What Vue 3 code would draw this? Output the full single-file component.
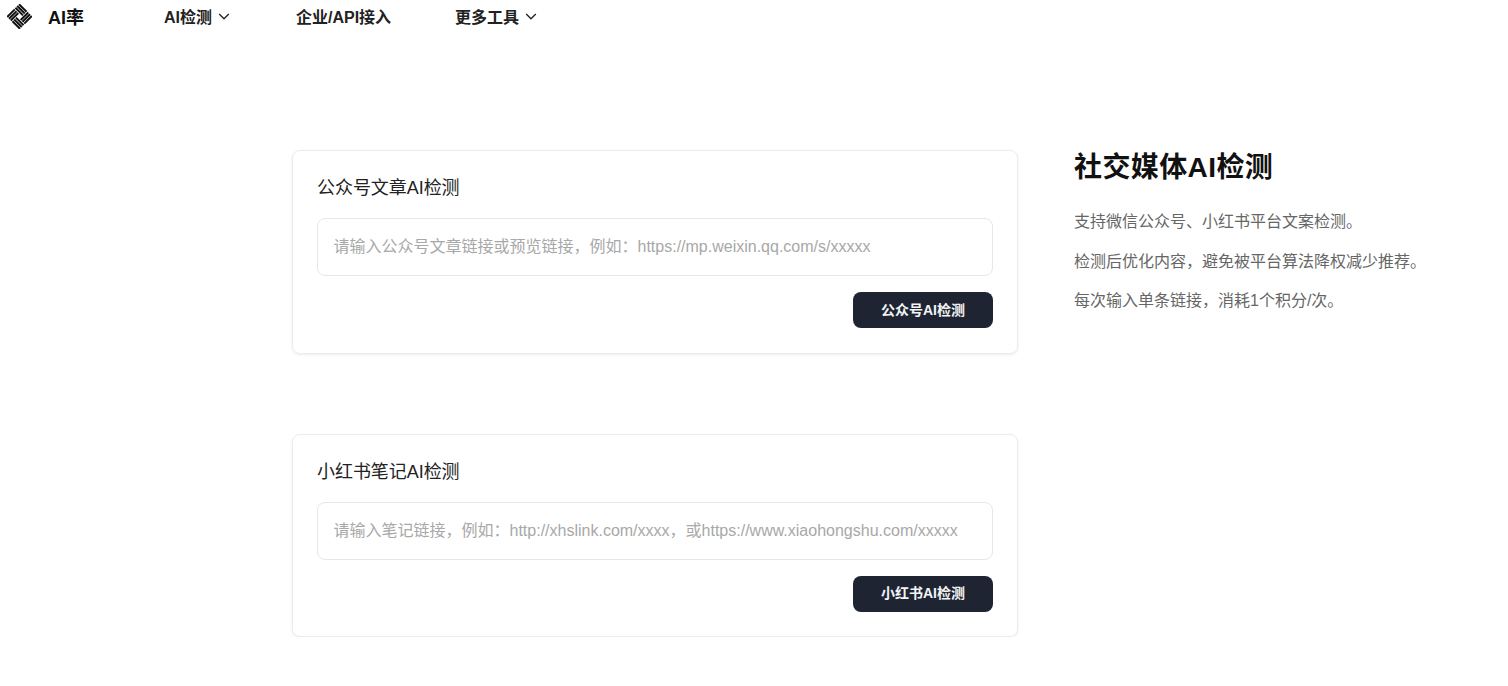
<template>
  <div class="page">
    <header class="nav">
      <div class="brand">
        <svg class="logo" viewBox="0 0 24 24" fill="none" stroke="#111" stroke-width="1.85">
          <g v-for="a in [0, 90, 180, 270]" :key="a" :transform="`rotate(${a} 12 12)`">
            <path d="M0.19 12.49 L7.47 5.21" />
            <path d="M1.89 14.19 L9.17 6.91" />
            <path d="M3.59 15.89 L10.87 8.61" />
          </g>
        </svg>
        <span class="brand-name">AI率</span>
      </div>
      <nav class="menu">
        <a v-for="item in menu" :key="item.label" class="menu-item" :style="{ width: item.width + 'px' }">
          {{ item.label }}
          <svg v-if="item.arrow" class="arrow" viewBox="0 0 12 12" fill="none" stroke="#222" stroke-width="1.3">
            <path d="M1.2 4 L6 8.8 L10.8 4" />
          </svg>
        </a>
      </nav>
    </header>

    <main class="content">
      <section class="cards">
        <div v-for="card in cards" :key="card.title" class="card">
          <h3 class="card-title">{{ card.title }}</h3>
          <input class="link-input" type="text" :placeholder="card.placeholder" />
          <div class="actions">
            <button class="submit">{{ card.button }}</button>
          </div>
        </div>
      </section>

      <aside class="intro">
        <h1 class="intro-title">社交媒体AI检测</h1>
        <p v-for="line in lines" :key="line" class="intro-line">{{ line }}</p>
      </aside>
    </main>
  </div>
</template>

<script setup>
const menu = [
  { label: 'AI检测', arrow: true, width: 132 },
  { label: '企业/API接入', arrow: false, width: 159 },
  { label: '更多工具', arrow: true, width: 120 }
]

const cards = [
  {
    title: '公众号文章AI检测',
    placeholder: '请输入公众号文章链接或预览链接，例如：https://mp.weixin.qq.com/s/xxxxx',
    button: '公众号AI检测'
  },
  {
    title: '小红书笔记AI检测',
    placeholder: '请输入笔记链接，例如：http://xhslink.com/xxxx，或https://www.xiaohongshu.com/xxxxx',
    button: '小红书AI检测'
  }
]

const lines = [
  '支持微信公众号、小红书平台文案检测。',
  '检测后优化内容，避免被平台算法降权减少推荐。',
  '每次输入单条链接，消耗1个积分/次。'
]
</script>

<style>
html, body {
  margin: 0;
  background: #fff;
}
</style>

<style scoped>
.page {
  font-family: "Liberation Sans", "Noto Sans CJK SC", sans-serif;
  color: #111;
}

.nav {
  display: flex;
  align-items: center;
  height: 32px;
  padding-left: 7px;
}

.brand {
  display: flex;
  align-items: center;
  width: 157px;
}

.logo {
  width: 25px;
  height: 25px;
  margin-right: 16px;
}

.brand-name {
  font-size: 18px;
  font-weight: 700;
}

.menu {
  display: flex;
}

.menu-item {
  display: flex;
  align-items: center;
  gap: 6px;
  font-size: 16px;
  font-weight: 700;
  color: #222;
}

.arrow {
  width: 12px;
  height: 12px;
}

.content {
  display: flex;
  align-items: flex-start;
  padding: 118px 0 0 292px;
}

.cards {
  display: flex;
  flex-direction: column;
  gap: 80px;
  width: 726px;
  margin-right: 56px;
}

.card {
  box-sizing: border-box;
  height: 203.5px;
  padding: 24px 24px 24px;
  border: 1px solid #ececec;
  border-radius: 8px;
  box-shadow: 0 1px 3px rgba(0, 0, 0, 0.08);
}

.card-title {
  margin: 0 0 16px;
  font-size: 18px;
  font-weight: 400;
  line-height: 27px;
  letter-spacing: -0.05px;
  color: #222;
}

.link-input {
  display: block;
  box-sizing: border-box;
  width: 100%;
  height: 58px;
  padding: 0 15.5px;
  border: 1px solid #e5e7eb;
  border-radius: 8px;
  outline: none;
  font-family: inherit;
  font-size: 16px;
}

.link-input::placeholder {
  color: #a8a8a8;
}

.actions {
  display: flex;
  justify-content: flex-end;
  margin-top: 16px;
}

.submit {
  width: 140px;
  height: 36px;
  padding: 0 0 3px;
  border: none;
  border-radius: 8px;
  background: #1f2433;
  color: #f3f4f6;
  font-family: inherit;
  font-size: 14px;
  font-weight: 700;
}

.intro-title {
  margin: 0 0 24px;
  font-size: 28px;
  line-height: 36px;
  font-weight: 700;
  letter-spacing: 0.4px;
  color: #111;
}

.intro-line {
  margin: 0 0 15.5px;
  font-size: 16px;
  line-height: 24px;
  color: #666;
}
</style>
